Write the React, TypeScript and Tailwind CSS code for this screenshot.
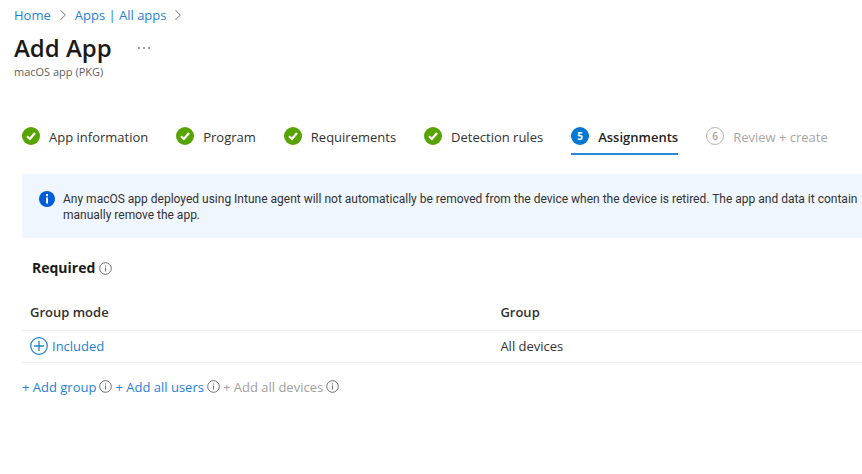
import { ChevronRight } from "lucide-react";

const steps = [
  { label: "App information", state: "done", number: 1 },
  { label: "Program", state: "done", number: 2 },
  { label: "Requirements", state: "done", number: 3 },
  { label: "Detection rules", state: "done", number: 4 },
  { label: "Assignments", state: "current", number: 5 },
  { label: "Review + create", state: "upcoming", number: 6 },
];

function CheckBadge() {
  return (
    <svg viewBox="0 0 18 18" className="size-[18px] shrink-0" aria-hidden="true">
      <circle cx="9" cy="9" r="9" fill="#57a300" />
      <path d="M5 9.2 7.9 12 13 6" fill="none" stroke="#fff" strokeWidth="2.2" />
    </svg>
  );
}

function InfoOutline() {
  return (
    <svg viewBox="0 0 13 13" className="size-[13px] shrink-0" aria-hidden="true">
      <circle cx="6.5" cy="6.5" r="5.8" fill="none" stroke="#6f6e6d" strokeWidth="1" />
      <path d="M6.5 5.5v4M6.5 3.5v1" stroke="#6f6e6d" strokeWidth="1" />
    </svg>
  );
}

function InfoSolid() {
  return (
    <svg viewBox="0 0 16 16" className="size-4 shrink-0" aria-hidden="true">
      <circle cx="8" cy="8" r="8" fill="#015cda" />
      <path d="M8 6.6v6M8 3v2.2" stroke="#fff" strokeWidth="2" />
    </svg>
  );
}

function PlusCircle() {
  return (
    <svg viewBox="0 0 18 18" className="size-[18px] shrink-0" aria-hidden="true">
      <circle cx="9" cy="9" r="8.3" fill="none" stroke="#1c7fd6" strokeWidth="1.2" />
      <path d="M9 4v10M4 9h10" stroke="#1c7fd6" strokeWidth="1.3" />
    </svg>
  );
}

function StepIcon({ state, number }: { state: string; number: number }) {
  if (state === "done") return <CheckBadge />;
  if (state === "current") {
    return (
      <span className="flex size-[18px] shrink-0 items-center justify-center rounded-full bg-[#0078d4] text-[10px] font-bold text-white">
        {number}
      </span>
    );
  }
  return (
    <span className="flex size-[18px] shrink-0 items-center justify-center rounded-full border border-[#b5b4b2] text-[10px] font-semibold text-[#a6a5a3]">
      {number}
    </span>
  );
}

export default function App() {
  return (
    <div className="min-h-screen overflow-hidden bg-white pt-1 font-['Open_Sans','Noto_Sans',sans-serif] text-[13px] leading-5 text-[#323130]">
      <header className="px-3.5">
        <nav aria-label="Breadcrumb" className="flex items-center gap-[3px] leading-[22px] text-[#1f7fd8]">
          <a href="#home">Home</a>
          <ChevronRight className="size-[18px] text-[#8a8886]" strokeWidth={1.4} />
          <a href="#apps">Apps | All apps</a>
          <ChevronRight className="size-[18px] text-[#8a8886]" strokeWidth={1.4} />
        </nav>
        <div className="mt-1 flex items-center gap-6">
          <h1 className="text-2xl leading-9 font-semibold text-[#1b1a19]">Add App</h1>
          <button type="button" aria-label="More actions" className="flex gap-[3px] p-0.5">
            <span className="size-0.5 rounded-full bg-[#797775]" />
            <span className="size-0.5 rounded-full bg-[#797775]" />
            <span className="size-0.5 rounded-full bg-[#797775]" />
          </button>
        </div>
        <p className="text-[11px] leading-3 text-[#605e5c]">macOS app (PKG)</p>
      </header>

      <main className="pt-[49px] pl-[22px]">
        <div className="flex gap-7 whitespace-nowrap">
          {steps.map((step) => (
            <button
              key={step.label}
              type="button"
              disabled={step.state === "upcoming"}
              aria-current={step.state === "current" ? "step" : undefined}
              className={
                step.state === "current"
                  ? "flex h-7 items-start gap-[9px] border-b-2 border-[#2b88d8] font-semibold text-[#252423]"
                  : step.state === "upcoming"
                    ? "flex h-7 items-start gap-[9px] text-[#a6a5a3]"
                    : "flex h-7 items-start gap-[9px]"
              }
            >
              <StepIcon state={step.state} number={step.number} />
              <span>{step.label}</span>
            </button>
          ))}
        </div>

        <section className="mt-[19px] flex h-16 gap-2 rounded-l-xs bg-[#eff6ff] pt-[17px] pl-[17px] font-[Roboto,'Open_Sans',sans-serif] text-xs leading-4 whitespace-nowrap">
          <InfoSolid />
          <p>
            Any macOS app deployed using Intune agent will not automatically be removed from the device when the device is retired. The app and data it contain
            <br />
            manually remove the app.
          </p>
        </section>

        <div className="mt-5 flex items-center gap-1 pl-2.5">
          <h2 className="text-sm leading-5 font-bold text-[#1b1a19]">Required</h2>
          <InfoOutline />
        </div>

        <table className="mt-[17px] w-full table-fixed border-collapse text-left">
          <colgroup>
            <col className="w-[56%]" />
            <col />
          </colgroup>
          <thead>
            <tr className="h-[35px] border-b border-[#f0efee]">
              <th className="pl-2 font-semibold">Group mode</th>
              <th className="pl-2 font-semibold">Group</th>
            </tr>
          </thead>
          <tbody>
            <tr className="h-8 border-b border-[#f0efee]">
              <td className="pl-2">
                <a href="#included" className="flex items-center gap-1 text-[#1f7fd8]">
                  <PlusCircle />
                  Included
                </a>
              </td>
              <td className="pl-2">All devices</td>
            </tr>
          </tbody>
        </table>

        <div className="mt-3.5 flex items-center gap-[3px] text-[#1f7fd8]">
          <a href="#add-group">+ Add group</a>
          <InfoOutline />
          <a href="#add-users">+ Add all users</a>
          <InfoOutline />
          <button type="button" disabled className="text-[#a19f9d]">+ Add all devices</button>
          <InfoOutline />
        </div>
      </main>
    </div>
  );
}
